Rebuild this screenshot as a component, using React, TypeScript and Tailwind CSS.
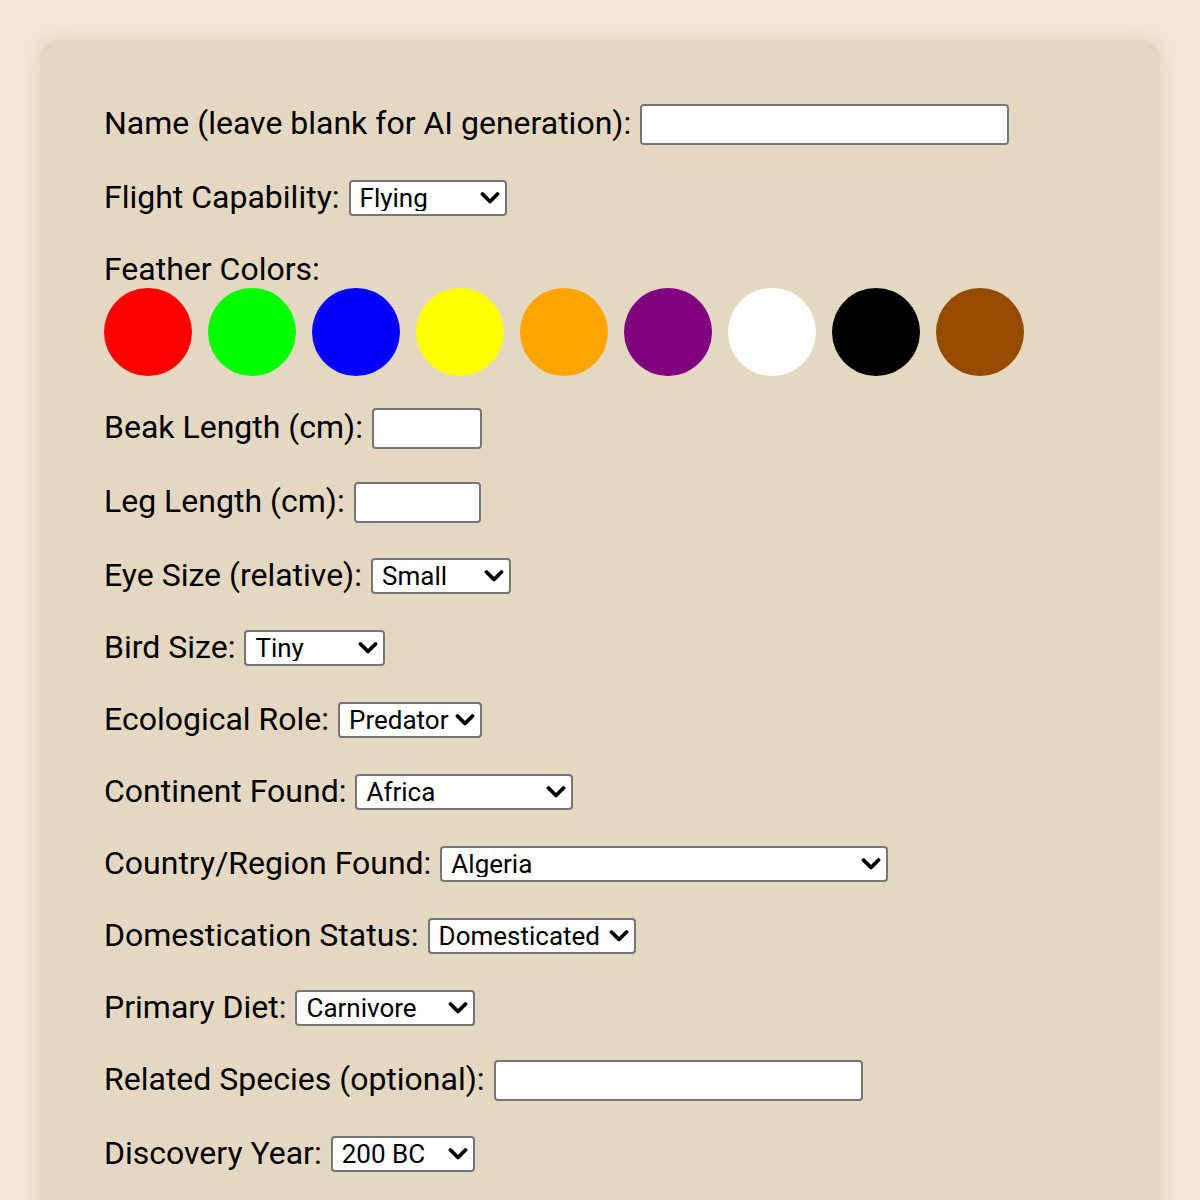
import React from "react";

const font = { fontFamily: "Roboto, 'Liberation Sans', sans-serif" };

function Chevron() {
  return (
    <svg
      width="20"
      height="13"
      viewBox="0 0 20 13"
      className="pointer-events-none absolute right-[7px] top-1/2 -translate-y-1/2"
    >
      <path d="M2.5 2.5 L10 10 L17.5 2.5" fill="none" stroke="#000" strokeWidth="3.8" strokeLinecap="round" strokeLinejoin="round" />
    </svg>
  );
}

function SelectBox({ value, width }: { value: string; width: string }) {
  return (
    <div className={`relative h-[36px] ${width}`}>
      <select
        defaultValue={value}
        className="h-full w-full appearance-none rounded-[4px] border-2 border-[#767676] bg-white pl-[9px] pr-[30px] text-[26px] leading-none text-black outline-none"
        style={font}
      >
        <option>{value}</option>
      </select>
      <Chevron />
    </div>
  );
}

function TextBox({ width }: { width: string }) {
  return (
    <input
      type="text"
      className={`h-[41px] ${width} rounded-[4px] border-2 border-[#767676] bg-white px-2 text-[26px] outline-none`}
      style={font}
    />
  );
}

function Row({ label, children, input }: { label: string; children: React.ReactNode; input?: boolean }) {
  return (
    <div className={`flex h-[42px] items-center gap-[9px] ${input ? "mb-[32px]" : "mb-[30px]"}`}>
      <label className="-translate-y-px text-[32px] leading-none text-black">{label}</label>
      {children}
    </div>
  );
}

const colors = ["#ff0000", "#00ff00", "#0000ff", "#ffff00", "#ffa500", "#800080", "#ffffff", "#000000", "#964b00"];

export default function App() {
  return (
    <div className="min-h-[1200px] bg-[#f2e6d8] px-[40px] pt-[40px]" style={font}>
      <div className="rounded-[16px] bg-[#e5d8c3] px-[64px] pb-[60px] pt-[63px] shadow-[0_0_24px_rgba(120,90,50,0.12)]">
        <Row label="Name (leave blank for AI generation):" input>
          <TextBox width="w-[369px]" />
        </Row>
        <Row label="Flight Capability:">
          <SelectBox value="Flying" width="w-[158px]" />
        </Row>
        <div className="flex h-[39px] items-center text-[32px] leading-none text-black">Feather Colors:</div>
        <div className="mb-[31px] flex gap-[16px]">
          {colors.map((c) => (
            <button key={c} className="h-[88px] w-[88px] rounded-full" style={{ backgroundColor: c }} aria-label={c} />
          ))}
        </div>
        <Row label="Beak Length (cm):" input>
          <TextBox width="w-[110px]" />
        </Row>
        <Row label="Leg Length (cm):" input>
          <TextBox width="w-[127px]" />
        </Row>
        <Row label="Eye Size (relative):">
          <SelectBox value="Small" width="w-[140px]" />
        </Row>
        <Row label="Bird Size:">
          <SelectBox value="Tiny" width="w-[141px]" />
        </Row>
        <Row label="Ecological Role:">
          <SelectBox value="Predator" width="w-[144px]" />
        </Row>
        <Row label="Continent Found:">
          <SelectBox value="Africa" width="w-[218px]" />
        </Row>
        <Row label="Country/Region Found:">
          <SelectBox value="Algeria" width="w-[448px]" />
        </Row>
        <Row label="Domestication Status:">
          <SelectBox value="Domesticated" width="w-[208px]" />
        </Row>
        <Row label="Primary Diet:">
          <SelectBox value="Carnivore" width="w-[180px]" />
        </Row>
        <Row label="Related Species (optional):" input>
          <TextBox width="w-[369px]" />
        </Row>
        <Row label="Discovery Year:">
          <SelectBox value="200 BC" width="w-[144px]" />
        </Row>
      </div>
    </div>
  );
}
